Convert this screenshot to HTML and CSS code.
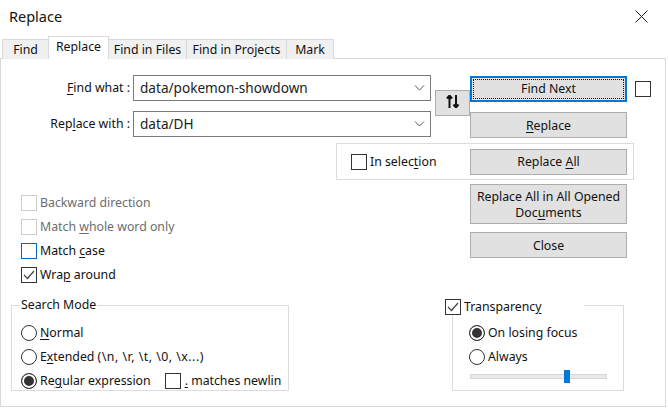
FILE: index.html
```html
<!DOCTYPE html>
<html lang="en">
<head>
<meta charset="utf-8">
<title>Replace</title>
<link rel="stylesheet" href="styles.css">
</head>
<body>
<div class="dialog">
  <header class="titlebar">
    <span class="title">Replace</span>
    <svg class="close" width="13" height="13" viewBox="0 0 13 13"><path d="M.5.5l12 12M12.500 .5l-12 12" stroke="#1a1a1a" fill="none"/></svg>
  </header>
  <nav class="tabs">
    <span class="tab tab-first">Find</span>
    <span class="tab tab-active">Replace</span>
    <span class="tab tab-files">Find in Files</span>
    <span class="tab tab-projects">Find in Projects</span>
    <span class="tab tab-mark">Mark</span>
  </nav>
  <main class="panel">
    <div class="grid">
      <div class="form">
        <div class="fields">
          <div class="field">
            <label class="field-label"><u>F</u>ind what :</label>
            <div class="combo"><span>data/pokemon-showdown</span>
              <svg width="11" height="6" viewBox="0 0 11 6"><path d="M1 .5l4.500 4.500L10 .5" stroke="#555" fill="none"/></svg></div>
          </div>
          <div class="field">
            <label class="field-label">Rep<u>l</u>ace with :</label>
            <div class="combo"><span>data/DH</span>
              <svg width="11" height="6" viewBox="0 0 11 6"><path d="M1 .5l4.500 4.500L10 .5" stroke="#555" fill="none"/></svg></div>
          </div>
        </div>
        <button class="btn swap" type="button" aria-label="Swap">
          <svg width="14" height="13" viewBox="0 0 14 13"><path d="M3.500 13V2M1 3.500L3.500 .5 6 3.500M10 0v11M7.500 9.500L10 12.500l2.500-3" stroke="#111" stroke-width="2" fill="none"/></svg>
        </button>
      </div>
      <div class="actions-top">
        <div class="find-row">
          <button class="btn focus" type="button"><span class="focus-ring">Find Next</span></button>
          <span class="box box-dark"></span>
        </div>
        <button class="btn" type="button"><u>R</u>eplace</button>
      </div>
      <div class="selection">
        <label class="check selection-check"><span class="box box-dark"></span><span>In selec<u>t</u>ion</span></label>
        <button class="btn" type="button">Replace <u>A</u>ll</button>
      </div>
      <div class="options">
        <label class="check muted"><span class="box box-off"></span><span>Backward direction</span></label>
        <label class="check muted"><span class="box box-off"></span><span>Match <u>w</u>hole word only</span></label>
        <label class="check"><span class="box box-blue"></span><span>Match <u>c</u>ase</span></label>
        <label class="check"><span class="box box-dark"><svg width="12" height="10" viewBox="0 0 12 10"><path d="M1 5l3.500 3.500L11 1" stroke="#444" stroke-width="1.200" fill="none"/></svg></span><span>Wra<u>p</u> around</span></label>
      </div>
      <div class="actions-bottom">
        <button class="btn btn-tall" type="button">Replace All in All Opened<br>Doc<u>u</u>ments</button>
        <button class="btn" type="button">Close</button>
      </div>
    </div>
    <div class="bottom">
      <section class="group search">
        <span class="legend">Search Mode</span>
        <label class="check"><span class="radio"></span><span><u>N</u>ormal</span></label>
        <label class="check"><span class="radio"></span><span>E<u>x</u>tended <span class="escapes">(\n, \r, \t, \0, \x...)</span></span></label>
        <div class="regex">
          <label class="check regex-label"><span class="radio radio-on"></span><span>Re<u>g</u>ular expression</span></label>
          <label class="check newline"><span class="box box-dark"></span><span><u>.</u> matches newline</span></label>
        </div>
      </section>
      <section class="group transparency">
        <label class="check legend legend-check"><span class="box box-dark"><svg width="12" height="10" viewBox="0 0 12 10"><path d="M1 5l3.500 3.500L11 1" stroke="#444" stroke-width="1.200" fill="none"/></svg></span><span>Transparenc<u>y</u></span></label>
        <label class="check"><span class="radio radio-on"></span><span>On losing focus</span></label>
        <label class="check"><span class="radio"></span><span>Always</span></label>
        <div class="slider"><span class="thumb"></span></div>
      </section>
    </div>
  </main>
</div>
</body>
</html>
```
FILE: styles.css
```css
* { box-sizing: border-box; }
html, body { margin: 0; padding: 0; }
body { width: 668px; height: 408px; background: #fff; color: #111; font: 12.3px/16px "Noto Sans", sans-serif; overflow: hidden; }
u { text-decoration-thickness: 1px; text-underline-offset: 2px; }
.dialog { display: flex; flex-direction: column; height: 100%; padding-bottom: 1px; }
.titlebar { height: 37px; flex: none; display: flex; align-items: flex-start; justify-content: space-between; padding: 8px 20px 0 9px; }
.title { font-size: 14.5px; line-height: 17px; }
.close { margin-top: 2px; }
.tabs { height: 22px; flex: none; display: flex; align-items: flex-end; padding-left: 2px; margin-bottom: -1px; position: relative; z-index: 1; }
.tab { height: 20px; background: #f0f0f0; border: 1px solid #d9d9d9; border-bottom: 0; margin-left: -1px; padding: 2px 0 0; text-align: center; flex: none; }
.tab-first { width: 47px; margin-left: 0; }
.tab-active { width: 61px; height: 23px; background: #fff; padding-top: 2px; margin-top: -3px; position: relative; z-index: 1; }
.tab-files { width: 79px; }
.tab-projects { width: 101px; }
.tab-mark { width: 48px; }
.panel { flex: 1; margin-right: 2px; border: 1px solid #d9d9d9; display: flex; flex-direction: column; }
.grid { display: grid; grid-template-columns: 469px 157px; grid-template-rows: 68px 37px 125px; padding-top: 16px; height: 246px; }
.form { grid-column: 1; grid-row: 1; display: flex; align-items: flex-start; }
.fields { display: flex; flex-direction: column; gap: 10px; }
.field { display: flex; align-items: center; }
.field-label { width: 132px; padding-right: 3px; text-align: right; flex: none; }
.combo { width: 298px; height: 26px; border: 1px solid #7a7a7a; background: #fff; display: flex; align-items: center; justify-content: space-between; padding: 0 5px 0 6px; font-size: 13.6px; color: #222; }
.swap { width: 26px; height: 32px; margin: 15px 0 0 4px; padding: 0; display: flex; align-items: center; justify-content: center; }
.btn { font: inherit; color: #111; background: #e1e1e1; border: 1px solid #adadad; height: 26px; width: 157px; padding: 1px 0 0; text-align: center; display: block; }
.actions-top { grid-column: 2; grid-row: 1; display: flex; flex-direction: column; gap: 10px; padding-top: 1px; }
.find-row { display: flex; align-items: center; gap: 8px; width: 181px; flex: none; }
.focus { border: 2px solid #0078d7; flex: none; padding: 1px; }
.focus-ring { display: block; height: 100%; line-height: 18px; border: 1px dotted #111; }
.selection { grid-column: 1 / -1; grid-row: 2; justify-self: end; width: 298px; height: 37px; margin-right: -7px; border: 1px solid #dcdcdc; display: flex; align-items: center; justify-content: space-between; padding: 0 6px 0 14px; }
.selection-check { height: 16px; }
.options { grid-column: 1; grid-row: 3; padding: 15px 0 0 20px; display: flex; flex-direction: column; gap: 8px; }
.actions-bottom { grid-column: 2; grid-row: 3; padding-top: 4px; display: flex; flex-direction: column; gap: 8px; }
.btn-tall { height: 40px; line-height: 16px; }
.check { display: flex; align-items: center; gap: 3px; height: 16px; white-space: nowrap; }
.muted { color: #6d6d6d; }
.box { width: 16px; height: 16px; flex: none; display: flex; align-items: center; justify-content: center; background: #fff; border: 1px solid #333; }
.box-off { border-color: #cccccc; }
.box-blue { border-color: #0067c0; }
.radio { width: 16px; height: 16px; flex: none; border: 1px solid #333; border-radius: 50%; background: #fff; }
.radio-on { background: #333; box-shadow: inset 0 0 0 2px #fff; }
.bottom { display: flex; justify-content: space-between; padding: 0 41px 0 10px; }
.group { position: relative; height: 86px; border: 1px solid #dcdcdc; display: flex; flex-direction: column; gap: 8px; padding: 19px 0 0 9px; }
.search { width: 278px; }
.legend { position: absolute; background: #fff; }
.search > .legend { left: 8px; top: -9px; padding: 0 1px; }
.escapes { letter-spacing: .5px; }
.regex { display: flex; gap: 14px; width: 261px; overflow: hidden; }
.regex-label { flex: none; }
.newline { gap: 4px; }
.transparency { width: 172px; padding-left: 16px; }
.legend-check { left: -8px; top: -7px; padding-right: 43px; }
.slider { width: 137px; height: 5px; margin: 1px 0 0 1px; background: #e7eaea; border: 1px solid #d6d6d6; position: relative; }
.thumb { position: absolute; left: 93px; top: -5px; width: 6px; height: 13px; background: #0078d7; }
```
